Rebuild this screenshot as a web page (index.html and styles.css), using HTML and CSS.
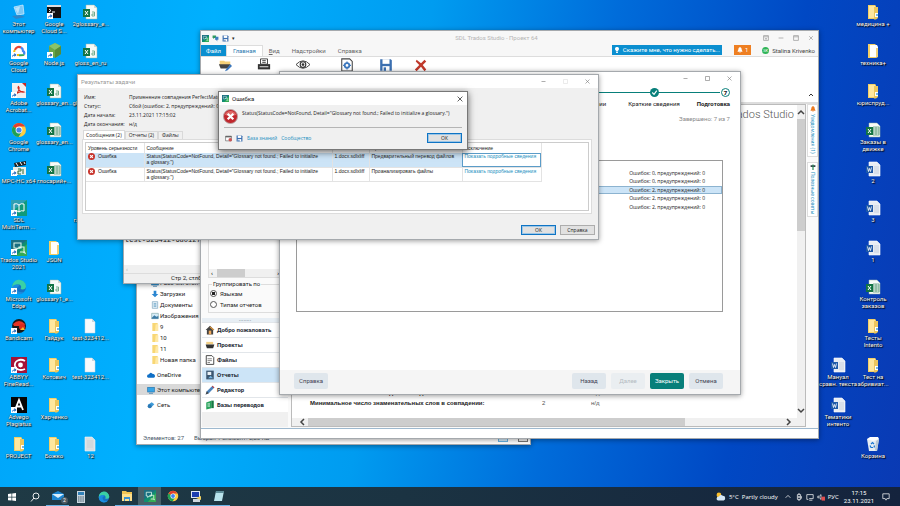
FILE: index.html
```html
<!DOCTYPE html>
<html lang="ru">
<head>
<meta charset="utf-8">
<title>Рабочий стол</title>
<link rel="stylesheet" href="styles.css">
</head>
<body>
<svg class="sprite" aria-hidden="true">
  <symbol id="arrow" viewBox="0 0 6 6"><rect width="6" height="6" fill="#fff"/><path d="M1 5.4C1 3.2 2 2.4 3.4 2.4V1L5.5 3 3.4 4.8V3.6C2.4 3.6 1.7 4 1 5.4Z" fill="#1560b8"/></symbol>
  <symbol id="pc" viewBox="0 0 16 16"><path d="M3 3 12 1 13 10 6 11Z" fill="#7cc8f5" stroke="#d8efff" stroke-width=".7"/><path d="M1 12 9 11 14 13 5 15Z" fill="#2e86c8"/><path d="M4 4 9 2.500 7 10Z" fill="#b8e2fb"/></symbol>
  <symbol id="term" viewBox="0 0 16 16"><rect x="1" y="1" width="14" height="13" fill="#111"/><rect x="1" y="1" width="14" height="2" fill="#ddd"/><path d="M3 5l2 1.500-2 1.500M6 8h3" stroke="#fff" fill="none"/><use href="#arrow" x="1" y="9" width="6" height="6"/></symbol>
  <symbol id="xls" viewBox="0 0 16 16"><path d="M4 1h8l3 3v11H4Z" fill="#f7fbf8" stroke="#9fb5a8" stroke-width=".5"/><path d="M12 1v3h3" fill="#cfd8d2"/><rect x="1" y="5" width="7" height="8" fill="#137444"/><path d="M3 7l3 4M6 7l-3 4" stroke="#fff"/><path d="M10 8h2.500v4h-2.500v-2h2.500" stroke="#68a584" fill="none" stroke-width=".9"/></symbol>
  <symbol id="xlsx" viewBox="0 0 16 16"><path d="M4 1h8l3 3v11H4Z" fill="#f7fbf8" stroke="#9fb5a8" stroke-width=".5"/><path d="M8 5h6v8H8ZM8 7h6M8 9h6M8 11h6M11 5v8" fill="none" stroke="#5a9d79" stroke-width=".8"/><rect x="1" y="5" width="7" height="8" fill="#137444"/><path d="M3 7l3 4M6 7l-3 4" stroke="#fff"/></symbol>
  <symbol id="doc" viewBox="0 0 16 16"><path d="M4 1h8l3 3v11H4Z" fill="#e8edf4" stroke="#fff" stroke-width=".6"/><path d="M9 6h5M9 8h5M9 10h5M9 12h5" stroke="#b9c5d6" stroke-width=".7"/><rect x="1" y="5" width="7" height="7" fill="#1f5aa8"/><path d="M2.500 6.500l1 4 1-3 1 3 1-4" stroke="#fff" stroke-width=".8" fill="none"/></symbol>
  <symbol id="file" viewBox="0 0 16 16"><path d="M3 1h7l3 3v11H3Z" fill="#f8fafc" stroke="#c9d6e0" stroke-width=".5"/><path d="M10 1v3h3" fill="#cbd5dd"/></symbol>
  <symbol id="filegray" viewBox="0 0 16 16"><path d="M3 1h7l3 3v11H3Z" fill="#d9dfe3" stroke="#f3f6f8" stroke-width=".6"/><path d="M5 5h6M5 7h6M5 9h6M5 11h6" stroke="#c3cbd0" stroke-width=".7"/></symbol>
  <symbol id="folder" viewBox="0 0 16 16"><path d="M3 1h7l1 1v13H3Z" fill="#f3cf66"/><path d="M4 2h6v12H4Z" fill="#ffe79e"/><path d="M9 3h4v11l-2 1.500H9Z" fill="#ecc65d"/><path d="M10 9h3v4h-3Z" fill="#fff"/><path d="M11 10h2v2h-2Z" fill="#79b8d9"/></symbol>
  <symbol id="folderdoc" viewBox="0 0 16 16"><path d="M3 1h7l1 1v13H3Z" fill="#f3cf66"/><path d="M5 2h7l1 2v10H5Z" fill="#fff"/><path d="M11 5h2v9l-2 1Z" fill="#f0d17a"/></symbol>
  <symbol id="cloud" viewBox="0 0 16 16"><rect width="16" height="16" fill="#fff"/><path d="M4 7A4 4 0 0 1 10 4.500" stroke="#e54335" stroke-width="2.200" fill="none"/><path d="M10 4.500A4 4 0 0 1 12 8Q14 9 13 11.500" stroke="#4285f4" stroke-width="2.200" fill="none"/><path d="M13 11.500Q12.500 12.500 8 12.200" stroke="#34a853" stroke-width="2" fill="none"/><path d="M4 7Q2 9 5 12H8" stroke="#fbbc05" stroke-width="2" fill="none"/><use href="#arrow" x="0" y="9" width="6" height="6"/></symbol>
  <symbol id="node" viewBox="0 0 16 16"><path d="M9 0l6 3v8l-6 4-6-4V3Z" fill="#6aa84a"/><path d="M9 0l6 3-6 4-6-4Z" fill="#8bc36a"/><path d="M9 7l6-4v8l-6 4Z" fill="#548c3a"/><use href="#arrow" x="1" y="9" width="6" height="6"/></symbol>
  <symbol id="pdf" viewBox="0 0 16 16"><rect x="1" y="0" width="14" height="15" fill="#efefef"/><path d="M11 0h4v4Z" fill="#ca2a24"/><path d="M4 12C8 9 9 5 7.500 3.500C6 5 9 10 13 9C11 8 7 9 4 12Z" fill="none" stroke="#d3281f" stroke-width="1.100"/><use href="#arrow" x="0" y="9" width="6" height="6"/></symbol>
  <symbol id="chrome" viewBox="0 0 16 16"><circle cx="8" cy="8" r="7" fill="#ffcd40"/><path d="M8 8 1.900 4.500A7 7 0 0 1 14.100 4.500H8Z" fill="#e3402f"/><path d="M8 8 1.900 4.500A7 7 0 0 0 7.500 15L11 9.500Z" fill="#1ea157"/><circle cx="8" cy="8" r="3.400" fill="#fff"/><circle cx="8" cy="8" r="2.600" fill="#4285f4"/></symbol>
  <symbol id="mpc" viewBox="0 0 16 16"><path d="M3 2 15 0v4L4 6Z" fill="#222"/><path d="M5 2l2 3M9 1l2 3M13 1l1 2" stroke="#fff"/><rect x="2" y="6" width="13" height="8" fill="#e9efe9"/><path d="M7 8h3v2H7v3h3M12 8v5" stroke="#2d6b3b" fill="none"/><use href="#arrow" x="0" y="9" width="6" height="6"/></symbol>
  <symbol id="mterm" viewBox="0 0 16 16"><rect width="16" height="16" fill="#109a7a"/><path d="M0 0h16L0 12Z" fill="#2f9fb4"/><path d="M3 4q3-1 5 1 2-2 5-1v7q-3-1-5 1-2-2-5-1ZM8 5v7" fill="none" stroke="#fff"/><use href="#arrow" x="0" y="10" width="6" height="6"/></symbol>
  <symbol id="trados" viewBox="0 0 16 16"><rect width="16" height="16" fill="#108e70"/><path d="M0 0h16L0 13Z" fill="#1b6f82"/><path d="M16 4v12H5Z" fill="#35ab55"/><path d="M3 3h7v5H7l-2 2V8H3Z M8 9V7h5v4l1 2-2-1H9" fill="none" stroke="#d9f5e8" stroke-width="1.100"/></symbol>
  <symbol id="edge" viewBox="0 0 16 16"><circle cx="8" cy="8" r="7" fill="#1672c4"/><path d="M1 8A7 7 0 0 1 15 7.500C15 10 12 11 9.500 10C11 8 10 5.500 7.500 5.500C4 5.500 2 7 1 9Z" fill="#3ad0a5"/><path d="M1 9C2 5 7 4.500 8.500 7C6 7 5 10 7.500 12.500C10 14 13 13 13.500 12.500A7 7 0 0 1 1 9Z" fill="#1a8ee0"/></symbol>
  <symbol id="bandi" viewBox="0 0 16 16"><circle cx="8" cy="8" r="7" fill="#191919"/><path d="M2 6q6-6 12 0l-1 2H3Z" fill="#e53322"/><circle cx="11" cy="9" r="3" fill="#d92a1c"/><path d="M9 12l3-3 2 3Z" fill="#f3bd28"/><use href="#arrow" x="0" y="10" width="6" height="6"/></symbol>
  <symbol id="abbyy" viewBox="0 0 16 16"><rect width="16" height="16" fill="#a51437"/><path d="M14 4C9 1 3 4 4 9c1 4 6 5 10 3" fill="none" stroke="#fff" stroke-width="1.800"/><circle cx="9.500" cy="8" r="2.400" fill="#fff"/><use href="#arrow" x="0" y="10" width="6" height="6"/></symbol>
  <symbol id="advego" viewBox="0 0 16 16"><rect width="16" height="16" fill="#050505"/><path d="M4 13 8 3l4 10M5.500 9.500h5" fill="none" stroke="#fff" stroke-width="1.800"/><use href="#arrow" x="0" y="10" width="6" height="6"/></symbol>
  <symbol id="bin" viewBox="0 0 16 16"><path d="M2 3h12l-2 12H4Z" fill="#e6edf3"/><path d="M2 3l3-2h8l1 2-6 2Z" fill="#fff"/><path d="M11 5l3-2-2 12-2-1Z" fill="#b9c7d3"/><path d="M6 8l1.500-1.500L9 8M5 9.500l1 2h2M9.500 9.500l-.5 2" stroke="#1b76d1" fill="none" stroke-width="1.200"/></symbol>
  <symbol id="disk" viewBox="0 0 12 12"><path d="M1 1h9l1 1v9H1Z" fill="#3b6fb0"/><path d="M3 1h6v4H3Z" fill="#fff"/><path d="M3 7h6v4H3Z" fill="#fff"/><path d="M4 8h2v3H4Z" fill="#3b6fb0"/></symbol>
  <symbol id="sfold" viewBox="0 0 12 12"><path d="M2 0h8v12H2Z" fill="#f8d775"/><path d="M7 2h4v10H6Z" fill="#ffe9a6"/></symbol>
  <symbol id="monitor" viewBox="0 0 12 12"><rect x="1" y="2" width="10" height="7" fill="#38a5e6" stroke="#2674ad"/><path d="M3 11h6" stroke="#2674ad"/></symbol>
</svg>

<div class="screen">
<main class="desktop">
  <ul class="icons">
    <li><svg><use href="#pc"/></svg><span>Этот компьютер</span></li>
    <li><svg><use href="#cloud"/></svg><span>Google<br>Cloud</span></li>
    <li><svg><use href="#pdf"/></svg><span>Adobe Acrobat...</span></li>
    <li><svg><use href="#chrome"/></svg><span>Google Chrome</span></li>
    <li><svg><use href="#mpc"/></svg><span class="line">MPC-HC x64</span></li>
    <li><svg><use href="#mterm"/></svg><span>SDL MultiTerm ...</span></li>
    <li><svg><use href="#trados"/><use href="#arrow" x="0" y="9" width="6" height="6"/></svg><span class="line">Trados Studio<br>2021</span></li>
    <li><svg><use href="#edge"/><use href="#arrow" x="0" y="9" width="6" height="6"/></svg><span>Microsoft Edge</span></li>
    <li><svg><use href="#bandi"/></svg><span>Bandicam</span></li>
    <li><svg><use href="#abbyy"/></svg><span>ABBYY FineRead...</span></li>
    <li><svg><use href="#advego"/></svg><span>Advego Plagiatus</span></li>
    <li><svg><use href="#folder"/></svg><span>PROJECT</span></li>
  </ul>
  <ul class="icons">
    <li><svg><use href="#term"/></svg><span>Google<br>Cloud S...</span></li>
    <li><svg><use href="#node"/></svg><span>Node.js</span></li>
    <li><svg><use href="#xls"/></svg><span>glossary_en...</span></li>
    <li><svg><use href="#xlsx"/></svg><span>glossary_en...</span></li>
    <li><svg><use href="#xlsx"/></svg><span>глосарий+...</span></li>
    <li></li>
    <li><svg><use href="#folderdoc"/></svg><span>JSON</span></li>
    <li><svg><use href="#xls"/></svg><span>glossary1_e...</span></li>
    <li><svg><use href="#folder"/></svg><span>Гайдук</span></li>
    <li><svg><use href="#folder"/></svg><span>Котович</span></li>
    <li><svg><use href="#folder"/></svg><span>Харченко</span></li>
    <li><svg><use href="#folder"/></svg><span>Божко</span></li>
  </ul>
  <ul class="icons">
    <li><svg><use href="#xls"/></svg><span>2glossary_e...</span></li>
    <li><svg><use href="#xls"/></svg><span>gloss_en_ru</span></li>
    <li><svg><use href="#xls"/></svg><span>glossary_en...</span></li>
    <li></li>
    <li></li>
    <li><svg><use href="#xls"/></svg><span>глоссарий...</span></li>
    <li></li>
    <li></li>
    <li><svg><use href="#file"/></svg><span class="line">test-323412...</span></li>
    <li><svg><use href="#file"/></svg><span class="line">test-323412...</span></li>
    <li></li>
    <li><svg><use href="#filegray"/></svg><span>12</span></li>
  </ul>
  <ul class="icons right">
    <li></li><li></li><li></li><li></li><li></li><li></li><li></li><li></li><li></li>
    <li><svg><use href="#doc"/></svg><span class="line">Мануал<br>сравн. текста</span></li>
    <li><svg><use href="#doc"/></svg><span>Тематики интенто</span></li>
    <li></li>
  </ul>
  <ul class="icons">
    <li><svg><use href="#folder"/></svg><span>медицина +</span></li>
    <li><svg><use href="#folderdoc"/></svg><span>техника+</span></li>
    <li><svg><use href="#folder"/></svg><span>юриспруд...</span></li>
    <li><svg><use href="#xlsx"/></svg><span>Заказы в движке</span></li>
    <li><svg><use href="#doc"/></svg><span>2</span></li>
    <li><svg><use href="#doc"/></svg><span>3</span></li>
    <li><svg><use href="#doc"/></svg><span>1</span></li>
    <li><svg><use href="#xlsx"/></svg><span>Контроль заказов</span></li>
    <li><svg><use href="#folder"/></svg><span>Тесты Intento</span></li>
    <li><svg><use href="#folder"/></svg><span>Тест на абривиат...</span></li>
    <li></li>
    <li><svg><use href="#bin"/></svg><span>Корзина</span></li>
  </ul>

  <section class="window explorer" aria-label="Проводник">
    <ul class="tree">
      <li><svg><use href="#monitor"/></svg>Рабочий стол</li>
      <li><svg viewBox="0 0 12 12"><path d="M4 1h4v5h3l-5 5-5-5h3Z" fill="#2a86d1"/></svg>Загрузки</li>
      <li><svg viewBox="0 0 12 12"><path d="M2 1h8v10H2Z" fill="#e3f0f8" stroke="#7ba5bd"/><path d="M4 4h4M4 6h4M4 8h4" stroke="#4a90b8"/></svg>Документы</li>
      <li><svg viewBox="0 0 12 12"><path d="M1 2h10v8H1Z" fill="#d6ecf8" stroke="#8aa"/><path d="M1 9l4-4 3 2 3-1v4H1Z" fill="#3d7ba5"/></svg>Изображения</li>
      <li><svg><use href="#sfold"/></svg>9</li>
      <li><svg><use href="#sfold"/></svg>10</li>
      <li><svg><use href="#sfold"/></svg>11</li>
      <li><svg><use href="#sfold"/></svg>Новая папка</li>
    </ul>
    <ul class="tree roots">
      <li><svg viewBox="0 0 12 12"><path d="M0 8q0-3 3-3 2-4 5-1 4 0 4 4 0 2-2 2H2Q0 10 0 8Z" fill="#0f6fc6"/></svg>OneDrive</li>
      <li class="current"><svg><use href="#monitor"/></svg>Этот компьютер</li>
      <li><svg viewBox="0 0 12 12"><path d="M1 6l6-4 4 3-6 6Z" fill="#3f9bd8"/><circle cx="4" cy="8" r="3" fill="#2a78b5"/></svg>Сеть</li>
    </ul>
    <footer><span>Элементов: 27</span><span>Выбран 1 элемент: 2,20 КБ</span><i class="view"></i><i class="view dark"></i></footer>
  </section>

  <section class="window notepad" aria-label="Блокнот">
    <pre>test-323412-6d01277d</pre>
    <div class="hbar">‹</div>
    <footer>Стр 2, стлб 21</footer>
  </section>

  <section class="window studio" aria-label="SDL Trados Studio">
    <header class="studio-title">
      <svg><use href="#trados"/></svg>
      <svg viewBox="0 0 12 12"><path d="M1 1h6v4H4L2 7V5H1Z" fill="#2f9a60"/><path d="M6 3h5v5H9v3L7 8H5Z" fill="#3b7fc0"/></svg>
      <svg><use href="#disk"/></svg><small>▾</small>
      <h1>SDL Trados Studio - Проект 64</h1>
      <div class="controls light"><button aria-label="Лента"><svg viewBox="0 0 10 10"><path d="M1 1h8v8H1ZM1 3h8M5 8V5M4 6l1-1 1 1"/></svg></button><button aria-label="Свернуть"><svg viewBox="0 0 10 10"><path d="M1 5h8"/></svg></button><button aria-label="Развернуть"><svg viewBox="0 0 10 10"><path d="M1 1h8v8H1ZM1 3h8"/></svg></button><button aria-label="Закрыть"><svg viewBox="0 0 10 10"><path d="M2 2l6 6M8 2l-6 6"/></svg></button></div>
    </header>
    <nav class="ribbon-tabs">
      <button class="file">Файл</button><button class="on">Главная</button><button><u>В</u>ид</button><button>Надстройки</button><button>Справка</button>
      <button class="tell"><svg viewBox="0 0 10 10"><path d="M5 0a3 3 0 0 1 2 5.500V7H3V5.500A3 3 0 0 1 5 0ZM3.500 8h3v2h-3Z" fill="#fff"/></svg>Скажите мне, что нужно сделать...</button>
      <button class="bell"><svg viewBox="0 0 10 10"><path d="M5 0q3 1 3 5l1 2v1H1V7l1-2q0-4 3-5ZM4 9h2v1H4Z" fill="#fff"/></svg>1</button>
      <button class="user"><i>SK</i>Stalina Krivenko</button>
    </nav>
    <div class="ribbon">
      <svg viewBox="0 0 16 16"><path d="M2 3h5l1 1h6v4H2Z" fill="#f5d078"/><path d="M1 7h13l-2 5H3Z" fill="#444"/><path d="M9 13l5-6 2 2-5 5-3 1Z" fill="#3b77bd"/></svg>
      <svg viewBox="0 0 16 16"><path d="M4 1h8v6H4ZM6 3h4M6 5h4" fill="#fff" stroke="#333"/><path d="M1 7h14v6H1Z" fill="#333"/><path d="M3 10h10" stroke="#fff"/></svg>
      <svg viewBox="0 0 16 16"><path d="M0 7.500Q8-1 16 7.500Q8 16 0 7.500Z" fill="#fff" stroke="#333"/><circle cx="8" cy="7.500" r="3.200" fill="none" stroke="#333" stroke-width="1.300"/><circle cx="8" cy="7.500" r="1.500" fill="#333"/></svg>
      <svg class="apart" viewBox="0 0 16 16"><path d="M2 1h9l3 3v11H2Z" fill="#fff" stroke="#444" stroke-width="1.200"/><circle cx="8" cy="8.500" r="2.600" fill="none" stroke="#3b77bd" stroke-width="2"/><path d="M8 4v2M8 11v2M3.500 8.500h2M10.500 8.500h2" stroke="#3b77bd" stroke-width="1.400"/></svg>
      <svg viewBox="0 0 12 12"><use href="#disk"/></svg>
      <svg class="near" viewBox="0 0 16 16"><path d="M3 2l5 4 4-4 2 2-4 4 4 5-2 2-4-5-5 5-2-2 5-5-4-4Z" fill="#c0392b"/></svg>
      <span class="collapse"><svg viewBox="0 0 6 6"><path d="M1 4l2-2 2 2" fill="none" stroke="#333"/></svg></span>
    </div>
    <div class="studio-body">
      <aside class="side">
        <div class="treebox"><div class="scroll-x"><b>‹</b><i></i><b>›</b></div></div>
        <fieldset><legend>Группировать по</legend>
          <label><input type="radio" name="group" checked>Языкам</label>
          <label><input type="radio" name="group">Типам отчетов</label>
        </fieldset>
        <div class="grip">········</div>
        <nav>
          <a href="#"><svg viewBox="0 0 16 16"><path d="M8 1 15 8H13V15H3V8H1Z" fill="#444"/><path d="M8 3l6 5" stroke="#e39a3c" stroke-width="2"/><path d="M6 9h4v6H6Z" fill="#f0a95b"/></svg>Добро пожаловать</a>
          <a href="#"><svg viewBox="0 0 16 16"><path d="M2 3h11v4H2Z" fill="#f2cf84"/><path d="M1 7h14l-2 6H3Z" fill="#333"/></svg>Проекты</a>
          <a href="#"><svg viewBox="0 0 16 16"><path d="M2 1h9l3 3v11H2Z" fill="#fff" stroke="#333" stroke-width="1.400"/><path d="M4 6h7M4 9h7M4 12h4" stroke="#444"/></svg>Файлы</a>
          <a href="#" class="on"><svg viewBox="0 0 16 16"><path d="M2 1h12v14H2Z" fill="#3b5670"/><path d="M4 3h6v5H4Z" fill="#e9f0f5"/><path d="M5 13l4-4 4 4Z" fill="#75b4df"/></svg>Отчеты</a>
          <a href="#"><svg viewBox="0 0 16 16"><path d="M1 15l2-5 9-9 3 3-9 9Z" fill="#4a83bd"/><path d="M1 15l2-5 3 3Z" fill="#444"/><path d="M11 2l3 3 1-1-3-3Z" fill="#c33"/></svg>Редактор</a>
          <a href="#"><svg viewBox="0 0 16 16"><path d="M2 4l8-3v12l-8 2Z" fill="#27a35b"/><path d="M10 1h4v12h-4Z" fill="#157a42"/><path d="M4 6h4M4 8h4M4 10h4" stroke="#fff"/></svg>Базы переводов</a>
        </nav>
        <div class="filler"></div>
      </aside>
      <div class="report">
        <div class="page">
          <h2>SDL Trados Studio</h2>
          <table>
            <tr><th>Минимальное число слов для совпадений:</th><td>2</td><td>н/д</td></tr>
            <tr><th>Минимальное число знаменательных слов в совпадении:</th><td>2</td><td>н/д</td></tr>
          </table>
        </div>
        <div class="scroll-y"><svg viewBox="0 0 8 8"><path d="M1 6l3-3 3 3"/></svg><i></i><svg viewBox="0 0 8 8"><path d="M1 2l3 3 3-3"/></svg></div>
        <div class="scroll-x wide"><svg viewBox="0 0 8 8"><path d="M6 1 3 4l3 3"/></svg><i></i><svg viewBox="0 0 8 8"><path d="M2 1l3 3-3 3"/></svg></div>
      </div>
      <aside class="dock">
        <button><svg viewBox="0 0 10 10"><path d="M5 0q3 1 3 5l1 2v1H1V7l1-2q0-4 3-5ZM4 9h2v1H4Z" fill="#ea7a22"/></svg>Уведомления (1)</button>
        <button><svg viewBox="0 0 10 10"><path d="M1 2h8v3H1Z" fill="#37434d"/><path d="M4 1h2v9H4Z" fill="#2b8a57"/></svg>Полезные советы</button>
      </aside>
    </div>
    <footer class="studio-status"></footer>
  </section>

  <section class="window wizard" aria-label="Пакетная обработка">
    <div class="controls"><button aria-label="Свернуть"><svg viewBox="0 0 10 10"><path d="M1 5h8"/></svg></button><button aria-label="Развернуть"><svg viewBox="0 0 10 10"><path d="M1 1h8v8H1Z"/></svg></button><button aria-label="Закрыть"><svg viewBox="0 0 10 10"><path d="M1 1l8 8M9 1l-8 8"/></svg></button></div>
    <ol class="steps">
      <li><svg viewBox="0 0 10 10"><circle cx="5" cy="5" r="5" fill="#087f7a"/><path d="M2.500 5l2 2 3-4" fill="none" stroke="#fff" stroke-width="1.300"/></svg>Обработка серии</li>
      <li><svg viewBox="0 0 10 10"><circle cx="5" cy="5" r="5" fill="#087f7a"/><path d="M2.500 5l2 2 3-4" fill="none" stroke="#fff" stroke-width="1.300"/></svg>Краткие сведения</li>
      <li class="now"><b>7</b>Подготовка</li>
    </ol>
    <p class="done">Завершено: 7 из 7</p>
    <ul class="tasks">
      <li>Ошибок: 0, предупреждений: 0</li>
      <li>Ошибок: 0, предупреждений: 0</li>
      <li class="on">Ошибок: 2, предупреждений: 0</li>
      <li>Ошибок: 2, предупреждений: 0</li>
      <li>Ошибок: 2, предупреждений: 0</li>
    </ul>
    <footer><button class="help">Справка</button><button>Назад</button><button disabled>Далее</button><button class="primary">Закрыть</button><button>Отмена</button></footer>
  </section>

  <section class="window results" aria-label="Результаты задачи">
    <header><span>Результаты задачи</span>
      <div class="controls"><button aria-label="Свернуть"><svg viewBox="0 0 10 10"><path d="M1 5h8"/></svg></button><button aria-label="Развернуть" disabled><svg viewBox="0 0 10 10"><path d="M1 1h8v8H1Z"/></svg></button><button aria-label="Закрыть"><svg viewBox="0 0 10 10"><path d="M1 1l8 8M9 1l-8 8"/></svg></button></div>
    </header>
    <dl>
      <dt>Имя:</dt><dd>Применение совпадения PerfectMatch</dd>
      <dt>Статус:</dt><dd>Сбой (ошибок: 2, предупреждений: 0)</dd>
      <dt>Дата начала:</dt><dd>23.11.2021 17:15:02</dd>
      <dt>Дата окончания:</dt><dd>н/д</dd>
    </dl>
    <div class="tabs"><button class="on">Сообщения (2)</button><button>Отчеты (2)</button><button>Файлы</button></div>
    <div class="panel"><div class="sheet">
      <table>
        <thead><tr><th class="c1">Уровень серьезности</th><th class="c2">Сообщение</th><th class="c3">Файл</th><th class="c4">Причина</th><th class="c5">Исключение</th></tr></thead>
        <tbody>
          <tr class="on"><td><svg viewBox="0 0 10 10"><circle cx="5" cy="5" r="5" fill="#c8332b"/><path d="M3 3l4 4M7 3l-4 4" stroke="#fff" stroke-width="1.600"/></svg>Ошибка</td><td>Status(StatusCode=NotFound, Detail="Glossary not found.; Failed to initialize<br>a glossary.")</td><td>1.docx.sdlxliff</td><td>Предварительный перевод файлов</td><td class="focus"><a href="#">Показать подробные сведения</a></td></tr>
          <tr><td><svg viewBox="0 0 10 10"><circle cx="5" cy="5" r="5" fill="#c8332b"/><path d="M3 3l4 4M7 3l-4 4" stroke="#fff" stroke-width="1.600"/></svg>Ошибка</td><td>Status(StatusCode=NotFound, Detail="Glossary not found.; Failed to initialize<br>a glossary.")</td><td>1.docx.sdlxliff</td><td>Проанализировать файлы</td><td><a href="#">Показать подробные сведения</a></td></tr>
        </tbody>
      </table>
    </div></div>
    <footer><button class="btn default">ОК</button><button class="btn">Справка</button></footer>
  </section>

  <section class="window error" role="alertdialog" aria-label="Ошибка">
    <header><svg><use href="#trados"/></svg><span>Ошибка</span>
      <button class="x" aria-label="Закрыть"><svg viewBox="0 0 10 10"><path d="M1 1l8 8M9 1l-8 8"/></svg></button></header>
    <div class="message"><svg viewBox="0 0 16 16"><circle cx="8" cy="8" r="7.500" fill="#c1272d" stroke="#b9a5a5"/><path d="M2 6a6.500 6.500 0 0 1 12 0q-6 3-12 0Z" fill="#e06a68"/><path d="M5 5l6 6M11 5l-6 6" stroke="#fff" stroke-width="2.400"/></svg>
      <p>Status(StatusCode=NotFound, Detail="Glossary not found.; Failed to initialize a glossary.")</p></div>
    <footer>
      <svg viewBox="0 0 12 12"><path d="M1 2h10v8H1Z" fill="#fff" stroke="#555"/><path d="M1 2h10v2H1Z" fill="#555"/><circle cx="9" cy="8" r="3" fill="#c55"/></svg>
      <svg><use href="#disk"/></svg>
      <a href="#">База знаний</a><a href="#">Сообщество</a><button class="btn default">ОК</button>
    </footer>
  </section>
</main>

<footer class="taskbar">
  <button aria-label="Пуск"><svg viewBox="0 0 12 12"><path d="M2 3l3.500-.5v3.200H2ZM6.200 2.400 10 2v3.700H6.200ZM2 6.400h3.500v3.200L2 9.200ZM6.200 6.400H10V10l-3.800-.4Z" fill="#fff"/></svg></button>
  <button aria-label="Поиск"><svg viewBox="0 0 12 12"><circle cx="7" cy="5" r="3" fill="none" stroke="#fff" stroke-width=".9"/><path d="M5 7 2 10.500" stroke="#fff" stroke-width=".9"/></svg></button>
  <button class="run" aria-label="Почта"><svg viewBox="0 0 12 12"><path d="M0 4l6-3 6 3v6H0Z" fill="#1c86d1"/><path d="M0 4h12L6 8Z" fill="#d9effc"/></svg><em>2</em></button>
  <button aria-label="Калькулятор"><svg viewBox="0 0 12 12"><path d="M2 0h8v12H2Z" fill="#c9d6df"/><path d="M3 1h6v3H3Z" fill="#3181b8"/><path d="M3 6h6M3 8h6M3 10h6" stroke="#405866" stroke-dasharray="1.500 .7"/></svg></button>
  <button aria-label="Edge"><svg><use href="#edge"/></svg></button>
  <button class="run" aria-label="Проводник"><svg viewBox="0 0 12 12"><path d="M1 1h4l1 1h5v9H1Z" fill="#f1c453"/><path d="M1 4h10v7H1Z" fill="#ffe08a"/><path d="M3 7h6v4H8V9H4v2H3Z" fill="#3a91d0"/></svg></button>
  <button class="run active" aria-label="Trados Studio"><svg><use href="#trados"/></svg></button>
  <button class="run" aria-label="Chrome"><svg><use href="#chrome"/></svg></button>
  <button class="run" aria-label="Удалённый стол"><svg viewBox="0 0 12 12"><path d="M1 1h9v7H1Z" fill="#dfe8f3"/><path d="M2 2h7v5H2Z" fill="#1d3fb0"/><path d="M3 9h7v3H3Z" fill="#cdd6dd"/><path d="M6 8l5-2v4Z" fill="#f0d060"/></svg></button>
  <button class="run" aria-label="Блокнот"><svg viewBox="0 0 12 12"><path d="M3 1h8l-2 10H1Z" fill="#b9e3ec"/><path d="M3 1h8v2H3Z" fill="#5f8e9a"/></svg></button>
  <div class="tray">
    <svg class="weather" viewBox="0 0 14 12"><circle cx="5" cy="4" r="3" fill="#fbbf2c"/><path d="M2 9q0-3 3-3 2-3 5-1 3 0 3 3 0 3-2 3H4Q2 11 2 9Z" fill="#d5e7f5"/></svg>
    <span class="temp">5°C&nbsp; Partly cloudy</span>
    <svg viewBox="0 0 10 10"><path d="M2 6l3-3 3 3" /></svg>
    <svg viewBox="0 0 10 10"><path d="M3 2h4v6H3ZM4 1h2M4 9h2M8 4v3"/><circle cx="5" cy="5" r="1"/></svg>
    <svg viewBox="0 0 10 10"><path d="M1 2h8v5H4M1 2v6h2M4 9h4"/></svg>
    <svg viewBox="0 0 10 10"><path d="M1 4h2l2-2v6L3 6H1Z"/><path d="M6 5h4v4H6Z" fill="#e04f4f" stroke="#e04f4f"/></svg>
    <span>РУС</span>
    <time>17:15<br>23.11.2021</time>
    <svg class="note" viewBox="0 0 10 10"><path d="M1 1h8v6H6L5 9 4 7H1Z"/></svg>
  </div>
</footer>
</div>
</body>
</html>
```
FILE: styles.css
```css
* { box-sizing: border-box; }
body, ul, ol, dl, dd, p, h1, h2, pre, fieldset { margin: 0; padding: 0; }
ul, ol { list-style: none; }
body { font: 6px/8px Roboto, "Noto Sans", sans-serif; color: #222; }
button { font: inherit; color: inherit; border: 0; padding: 0; margin: 0; background: none; display: flex; align-items: center; justify-content: center; white-space: nowrap; }
a { color: #1b8fc0; text-decoration: none; }
svg { display: block; flex: none; }
.sprite { position: absolute; width: 0; height: 0; }

.screen { height: 100vh; display: flex; flex-direction: column; overflow: hidden; }
.desktop {
  flex: 1; min-height: 0; position: relative; overflow: hidden; display: flex; padding: 4px 9px 12px 0;
  background: linear-gradient(100deg, #00a2f8 0%, #00b0fe 22%, #009cf0 44%, #006cda 63%, #0048c4 82%, #0a3ab4 100%);
}

.icons { width: 36px; display: grid; grid-template-rows: repeat(12, minmax(0, 1fr)); }
.icons.right { margin-left: auto; }
.icons li { display: flex; flex-direction: column; align-items: center; }
.icons svg { width: 16px; height: 16px; }
.icons span { max-width: 36px; color: #fff; text-align: center; line-height: 7px; text-shadow: 0 0 1px #000, 1px 1px 1px #000; }
.icons .line { white-space: nowrap; max-width: none; }

.window { position: absolute; background: #fff; border: 1px solid #a5a9ad; box-shadow: 0 1px 5px rgba(0, 0, 0, .4); display: flex; flex-direction: column; overflow: hidden; }
.controls { display: flex; margin-left: auto; }
.controls button { width: 22px; height: 12px; }
.controls svg, .x svg { width: 6px; height: 6px; fill: none; stroke: #777; stroke-width: 1.200; }
.controls button:disabled svg { stroke: #ddd; }
.btn { width: 35px; height: 10px; background: #e1e1e1; border: 1px solid #adadad; }
.btn.default { border: 1px solid #0f74c4; box-shadow: inset 0 0 0 1px #9cc6e6; }

.explorer { left: 136px; top: 200px; width: 395px; height: 245px; padding-top: 76px; }
.tree li { height: 11px; display: flex; align-items: center; gap: 1px; padding-left: 14px; }
.tree svg { width: 8px; height: 8px; }
.roots { margin-top: 4px; display: grid; gap: 4px; }
.roots li { padding-left: 10px; gap: 2px; }
.roots .current { background: #d9d9d9; }
.explorer footer { margin-top: auto; height: 12px; display: flex; align-items: center; gap: 10px; padding: 0 2px 0 6px; color: #456; }
.view { width: 10px; height: 8px; border: 1px solid #68b4e4; background: #d5ecfa; margin-left: auto; }
.view.dark { margin: 0; border-color: #777; background: #eee; }

.notepad { left: 123px; top: 160px; width: 300px; height: 124px; padding-top: 75px; }
.notepad pre { font: 7px/9px "Liberation Mono", monospace; padding-left: 1px; flex: 1; }
.hbar { height: 8px; background: #f0f0f0; color: #aaa; padding-left: 2px; }
.notepad footer { height: 10px; background: #f0f0f0; border-top: 1px solid #ddd; padding-left: 47px; }

.studio { left: 200px; top: 30px; width: 619px; height: 409px; background: #fafafa; }
.studio-title { height: 14px; display: flex; align-items: center; gap: 3px; padding-left: 1px; background: #f7f7f7; }
.studio-title svg { width: 7px; height: 7px; }
.studio-title h1 { flex: 1; text-align: center; font: inherit; color: #b5b5b5; }
.studio-title .controls button { width: 15px; }
.studio-title .light svg { width: 6px; height: 6px; stroke: #999; }
.ribbon-tabs { height: 12px; display: flex; background: #f7f7f7; color: #666; border-bottom: 1px solid #ddd; }
.ribbon-tabs button { padding: 0 6px; }
.ribbon-tabs .file { background: #0b8fd0; color: #fff; width: 25px; }
.ribbon-tabs .on { background: #fff; color: #2b7bb0; border: 1px solid #ddd; border-bottom: 0; }
.ribbon-tabs svg { width: 6px; height: 8px; }
.ribbon-tabs .tell { margin-left: auto; background: #0b8fd0; color: #fff; gap: 3px; padding: 0 2px; height: 10px; }
.ribbon-tabs .bell { background: #ee7f22; color: #fff; gap: 2px; width: 17px; padding: 0; margin: 0 11px 0 12px; height: 10px; }
.ribbon-tabs .user { color: #444; padding: 0 3px 0 0; gap: 3px; }
.user i { width: 7px; height: 7px; border-radius: 50%; background: #2fb457; color: #fff; font: 4px/7px Roboto, sans-serif; }
.ribbon { height: 47px; display: flex; background: #fff; border-bottom: 2px solid #ddd; padding: 1px 4px 4px 17px; gap: 25px; }
.ribbon svg { width: 14px; height: 14px; }
.ribbon .apart { margin-left: 5px; }
.ribbon .near { margin-left: -4px; }
.ribbon .collapse { margin-left: auto; align-self: flex-end; }
.ribbon .collapse svg { width: 6px; height: 6px; }
.studio-body { flex: 1; min-height: 0; display: flex; }
.side { width: 87px; display: flex; flex-direction: column; padding: 0 0 1px 1px; }
.treebox { flex: 1; margin: 0 8px 0 6px; border: 1px solid #ddd; background: #fff; display: flex; flex-direction: column; justify-content: flex-end; }
.scroll-x { display: flex; align-items: center; height: 8px; background: #f0f0f0; }
.treebox .scroll-x { gap: 4px; padding-left: 2px; }
.treebox .scroll-x b:last-child { margin-left: auto; }
.scroll-x i { width: 28px; height: 8px; background: #cdcdcd; }
.side fieldset { margin: 2px 2px 5px 6px; border: 1px solid #ddd; padding: 0 0 2px 1px; }
.side legend { margin-left: 2px; padding: 0 1px; line-height: 8px; }
.side label { display: flex; align-items: center; gap: 3px; height: 11px; }
.side input { appearance: none; width: 7px; height: 7px; margin: 0; border: 1px solid #555; border-radius: 50%; background: #fff; }
.side input:checked { background: radial-gradient(circle, #222 0 40%, #fff 55%); }
.grip { height: 4px; background: #e7eef4; line-height: 4px; text-align: center; color: #345; }
.side nav { background: #fff; }
.side nav a { height: 15px; display: flex; align-items: center; gap: 2px; padding-left: 3px; border-top: 1px solid #e2e6ea; color: #1e2a35; font-weight: 700; }
.side nav svg { width: 10px; height: 10px; }
.side nav .on { background: #cce4f7; }
.filler { height: 15px; background: #f0f0f0; }
.report { flex: 1; margin: 0 1px 1px 3px; border: 1px solid #bbb; background: #fff; display: grid; grid-template: 1fr 8px / 1fr 8px; }
.page { display: flex; flex-direction: column; justify-content: space-between; padding: 2px 3px 10px 18px; }
.page h2 { text-align: right; font: 300 11px/16px Roboto, sans-serif; color: #555; }
.page table { width: 330px; border-spacing: 0; font: 6px/10px "Liberation Sans", sans-serif; }
.page th { text-align: left; padding: 0; white-space: nowrap; }
.page td { padding: 0; width: 49px; color: #555; }
.scroll-y { background: #f0f0f0; display: flex; flex-direction: column; }
.scroll-y svg, .wide svg { width: 8px; height: 8px; fill: none; stroke: #444; stroke-width: 1.500; }
.scroll-y svg { height: 14px; }
.scroll-y i { height: 112px; background: #cdcdcd; }
.scroll-y svg:last-child { margin-top: auto; }
.wide { grid-column: 1 / 3; gap: 2px; padding: 0 12px 0 6px; }
.wide i { width: 377px; }
.wide svg:last-child { margin-left: auto; }
.dock { width: 11px; display: flex; flex-direction: column; gap: 5px; }
.dock button { writing-mode: vertical-rl; border: 1px solid #ddd; background: #fff; color: #1b8fc0; width: 11px; gap: 2px; padding: 1px 0 2px; font-size: 5px; }
.dock svg { width: 6px; height: 6px; }
.studio-status { height: 10px; background: #fff; border-top: 1px solid #9eb9cf; }

.wizard { left: 279px; top: 71px; width: 462px; height: 324px; }
.wizard .controls svg { width: 5px; height: 5px; }
.steps { margin: 4px 10px 0 0; display: flex; justify-content: flex-end; background: linear-gradient(#087f7a, #087f7a) 0 4px / 440px 1px no-repeat; }
.steps li { width: 72px; display: flex; flex-direction: column; align-items: center; gap: 3px; }
.steps svg, .steps b { width: 9px; height: 9px; }
.steps b { border: 1px solid #087f7a; border-radius: 50%; background: #fff; text-align: center; line-height: 7px; }
.steps .now { width: 40px; align-items: flex-end; font-weight: 700; }
.done { text-align: right; padding: 7px 10px 0 0; color: #888; }
.tasks { margin: 37px 17px 0 16px; height: 152px; border: 1px solid #9a9a9a; padding: 8px 0 100px; display: grid; grid-template-rows: repeat(5, minmax(0, 1fr)); font: 5px/7px "Open Sans", sans-serif; }
.tasks li { padding-right: 16px; text-align: right; border: 1px solid transparent; }
.tasks .on { background: #cce4f7; border-color: #8cb3d0; }
.wizard footer { margin-top: auto; height: 24px; background: #f5f5f5; display: flex; gap: 5px; padding: 3px 17px 5px 14px; }
.wizard footer button { width: 34px; border-radius: 2px; background: #dfe6ec; color: #445; }
.wizard footer .help { margin-right: auto; }
.wizard footer button:disabled { background: #eaeef1; color: #b5bcc2; }
.wizard footer .primary { background: #087f7a; color: #fff; }

.results { left: 77px; top: 74px; width: 522px; height: 166px; background: #f0f0f0; font: 5px/7px "Open Sans", sans-serif; }
.results header { height: 13px; background: #fff; display: flex; align-items: center; padding-left: 3px; color: #999; font: 6px/8px Roboto, sans-serif; }
.results .controls svg { width: 5px; height: 5px; }
.results dl { display: grid; grid-template-columns: 45px 1fr; grid-auto-rows: 9px; padding: 6px 6px 0; }
.tabs { display: flex; align-items: flex-end; padding: 0 5px; }
.tabs button { border: 1px solid #d9d9d9; border-bottom: 0; padding: 0 3px; height: 8px; }
.tabs .on { background: #fff; height: 9px; padding: 0 2px; }
.panel { margin: 0 6px 0 4px; background: #fff; border: 1px solid #dcdcdc; padding: 2px; height: 75px; }
.sheet { border: 1px solid #ccc; height: 69px; }
.results table { border-collapse: collapse; table-layout: fixed; width: 455px; font: 5px/6px "Liberation Sans", sans-serif; }
.results th { font-weight: 400; text-align: left; height: 10px; }
.results th, .results td { padding: 0 2px; border-right: 1px solid #e3e3e3; }
.results td { height: 14px; vertical-align: top; border-bottom: 1px solid #e3e3e3; }
.results td svg { width: 7px; height: 7px; float: left; margin-right: 3px; }
.results tbody .on { background: #cce4f7; }
.results .focus { background: #fff; outline: 1px solid #5b9cc8; outline-offset: -1px; }
.c1 { width: 58px; } .c2 { width: 188px; } .c3 { width: 37px; } .c4 { width: 93px; } .c5 { width: 79px; }
.results footer { margin-top: auto; padding: 0 3px 4px; display: flex; gap: 4px; justify-content: flex-end; }

.error { left: 218px; top: 91px; width: 250px; height: 59px; background: #f0f0f0; border-color: #777; font: 5px/8px "Open Sans", sans-serif; box-shadow: 0 2px 7px rgba(0, 0, 0, .6); }
.error header { height: 13px; background: #fff; display: flex; align-items: center; gap: 3px; padding: 0 4px 0 3px; font: 6px/8px Roboto, sans-serif; }
.error header svg { width: 7px; height: 7px; }
.error .x { margin-left: auto; }
.error .x svg { width: 6px; height: 6px; stroke: #222; }
.message { display: flex; gap: 4px; margin: 0 5px; padding: 4px 0 3px; border-bottom: 1px solid #b5b5b5; white-space: nowrap; flex: 1; }
.message svg { width: 15px; height: 15px; margin-left: -1px; }
.error footer { height: 21px; display: flex; align-items: center; gap: 4px; padding: 0 5px 1px 6px; }
.error footer svg { width: 7px; height: 7px; }
.error .btn { margin-left: auto; }

.taskbar { height: 19px; display: flex; color: #fff; background: linear-gradient(90deg, #1f3a45, #1b3342 45%, #14233d); }
.taskbar > button { width: 23px; position: relative; }
.taskbar > button svg { width: 12px; height: 12px; }
.taskbar .run { border-bottom: 1px solid #6ab4e8; }
.taskbar .active { background: #486068; }
.taskbar em { position: absolute; right: 1px; bottom: 1px; width: 7px; height: 7px; border-radius: 50%; background: #4a5a63; font: 5px/7px Roboto, sans-serif; text-align: center; }
.tray { margin-left: auto; display: flex; align-items: center; gap: 3px; padding-right: 10px; line-height: 8px; font-family: "Open Sans", sans-serif; }
.tray svg { width: 8px; height: 8px; fill: none; stroke: #fff; stroke-width: .900; }
.tray .weather { width: 11px; height: 11px; stroke: none; }
.temp { margin-right: 3px; }
time { text-align: center; margin: 0 5px 0 2px; font: 6px/8px Roboto, sans-serif; }
```
